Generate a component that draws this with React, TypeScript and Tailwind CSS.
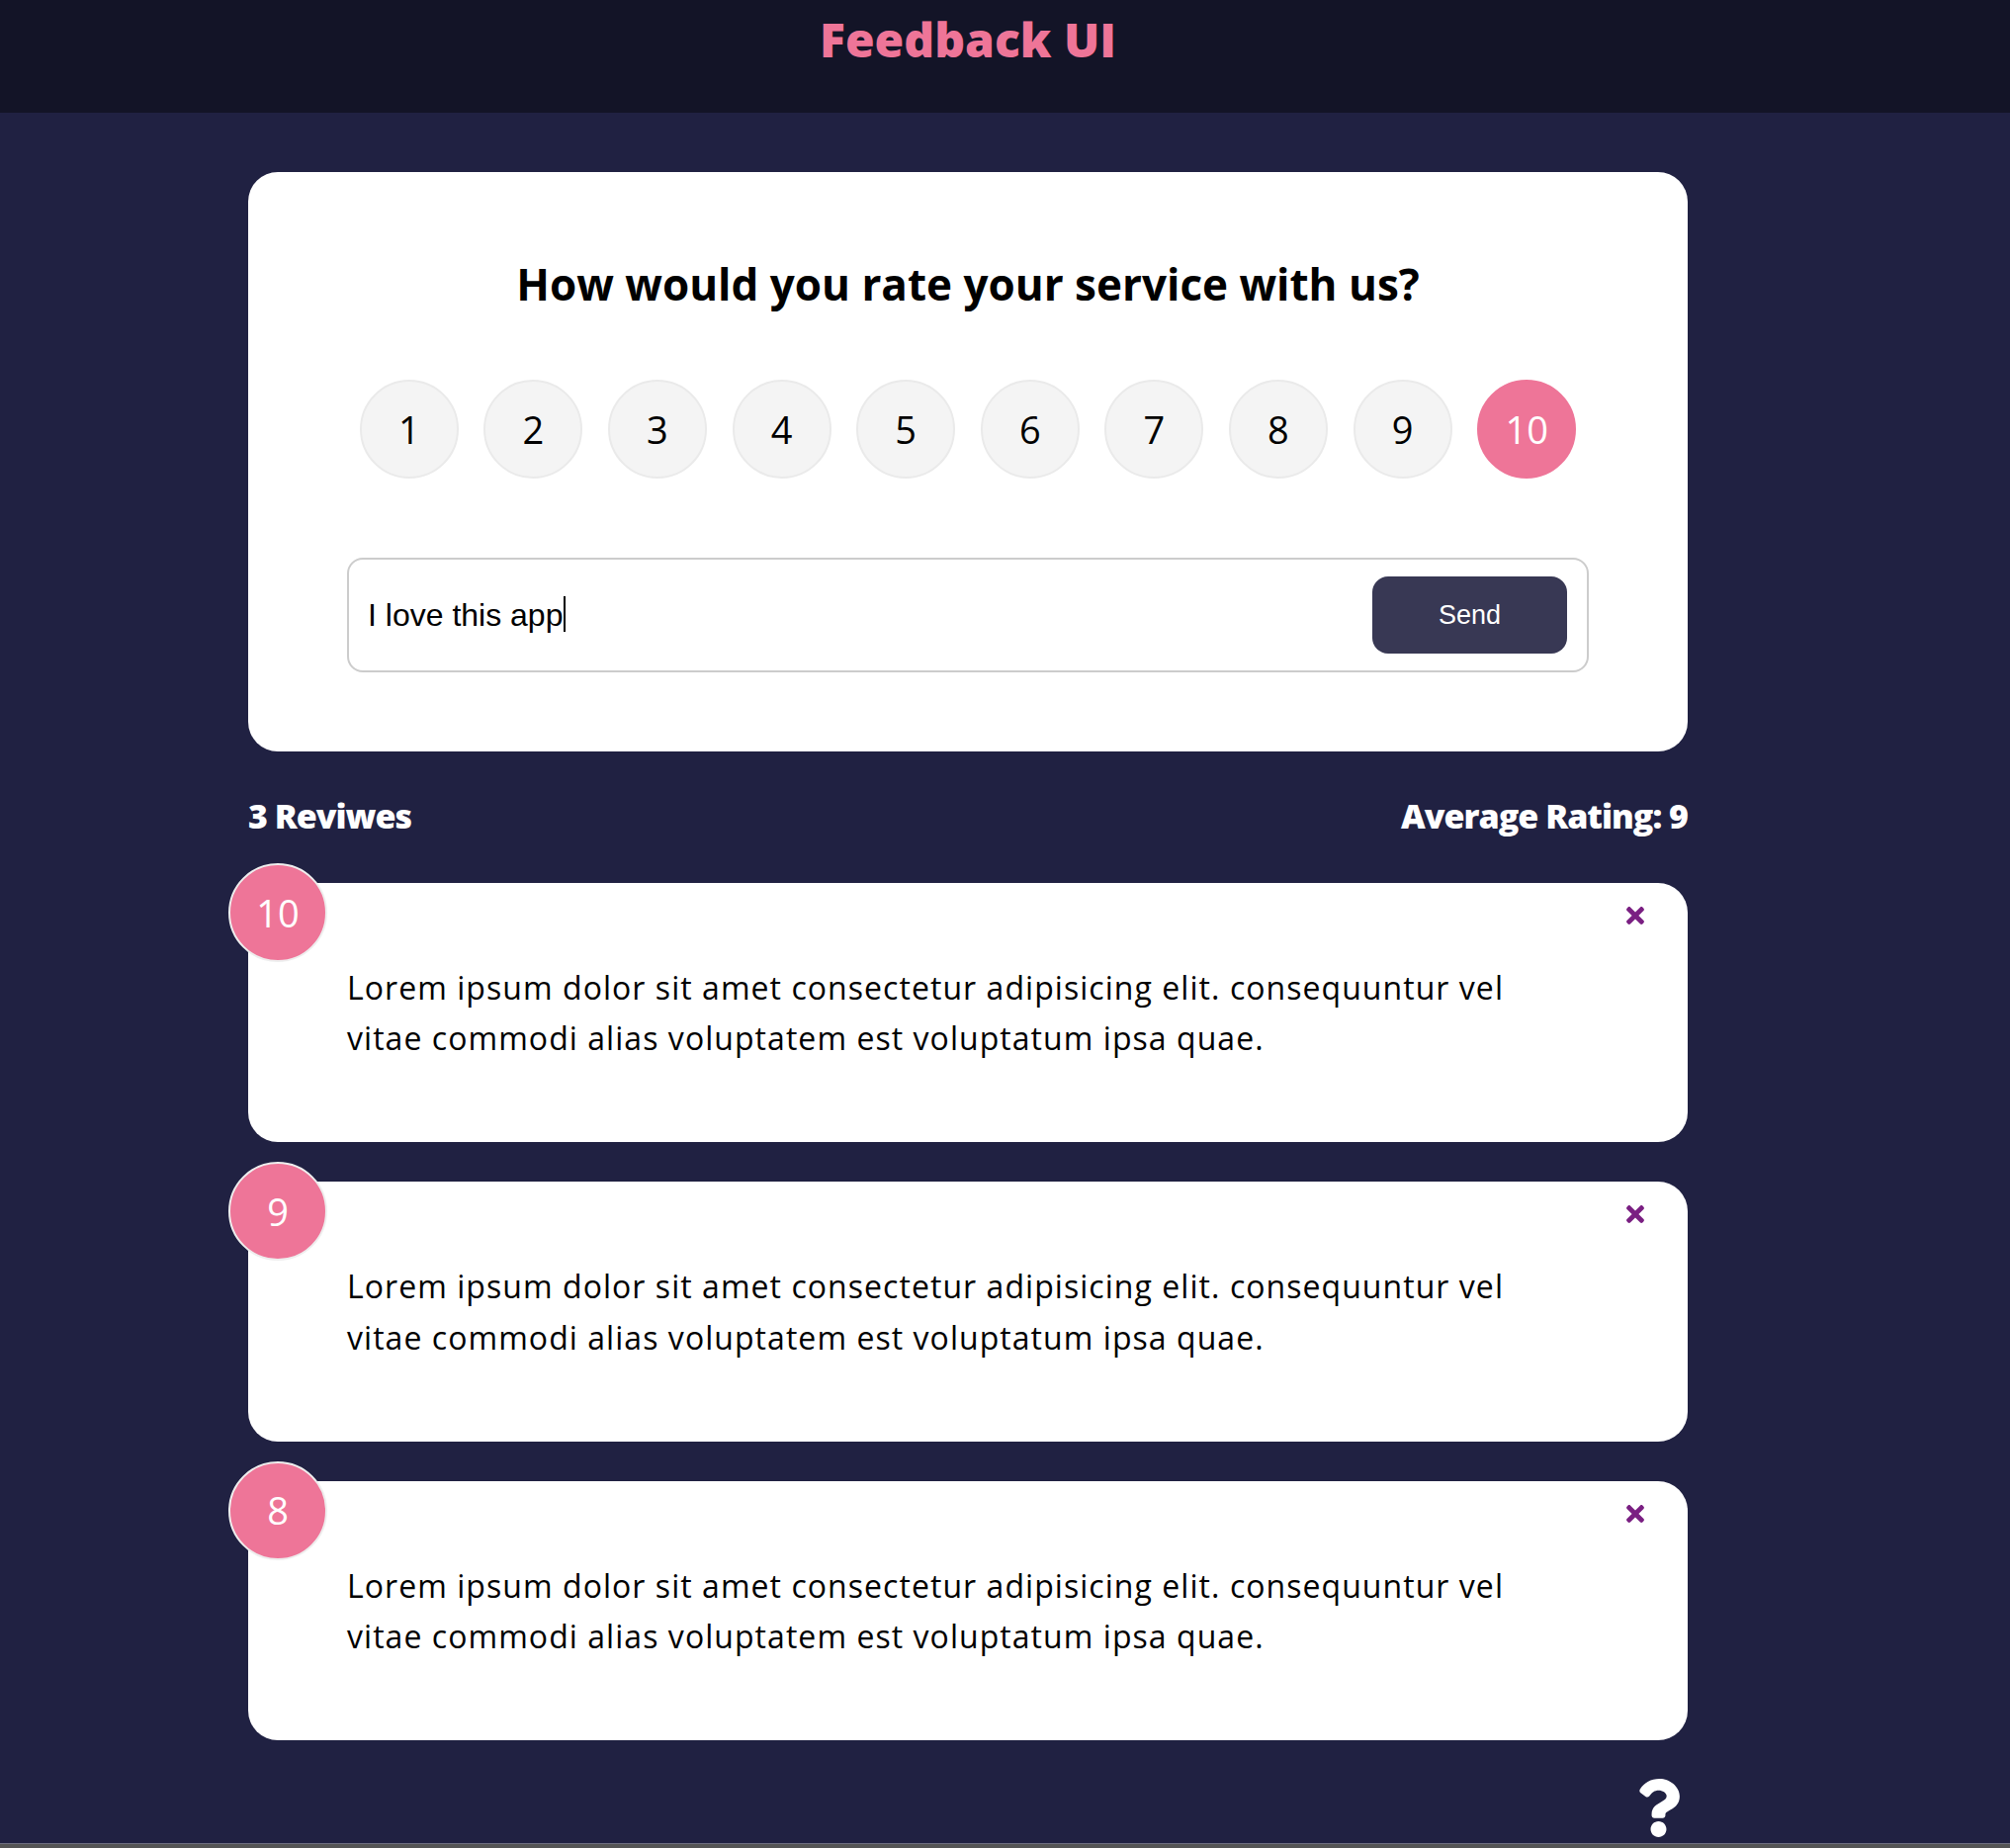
import React, { useState } from 'react';
import { FaTimes, FaQuestion } from 'react-icons/fa';

const reviews = [
  { id: 1, rating: 10, text: 'Lorem ipsum dolor sit amet consectetur adipisicing elit. consequuntur vel vitae commodi alias voluptatem est voluptatum ipsa quae.' },
  { id: 2, rating: 9, text: 'Lorem ipsum dolor sit amet consectetur adipisicing elit. consequuntur vel vitae commodi alias voluptatem est voluptatum ipsa quae.' },
  { id: 3, rating: 8, text: 'Lorem ipsum dolor sit amet consectetur adipisicing elit. consequuntur vel vitae commodi alias voluptatem est voluptatum ipsa quae.' },
];

const RatingSelect = ({ selected, onSelect }: { selected: number; onSelect: (n: number) => void }) => (
  <ul className="mt-[75px] flex justify-around">
    {Array.from({ length: 10 }, (_, i) => i + 1).map((n) => (
      <li key={n}>
        <button
          onClick={() => onSelect(n)}
          className={`flex h-[100px] w-[100px] items-center justify-center rounded-full border-2 text-[38px] ${
            selected === n ? 'border-[#ee7598] bg-[#ee7598] text-white' : 'border-[#eaeaea] bg-[#f4f4f4] text-black'
          }`}
        >
          {n}
        </button>
      </li>
    ))}
  </ul>
);

const ReviewCard = ({ rating, text }: { rating: number; text: string }) => (
  <div className="relative rounded-[30px] bg-white px-[100px] py-[80px]">
    <div className="absolute -left-[20px] -top-[20px] flex h-[100px] w-[100px] items-center justify-center rounded-full border-2 border-[#eeeeee] bg-[#ee7598] text-[38px] text-white">
      {rating}
    </div>
    <button className="absolute right-[40px] top-[20px] text-[#7a1f82]">
      <FaTimes size={26} />
    </button>
    <p className="max-w-[1200px] text-[32px] leading-[1.6] tracking-[1.05px] text-black">{text}</p>
  </div>
);

export default function App() {
  const [selected, setSelected] = useState(10);

  return (
    <div className="relative flex h-[1869px] flex-col bg-[#202142] font-['Open_Sans',sans-serif]">
      <header className="h-[114px] shrink-0 bg-[#131427]">
        <div className="w-[1958px] pt-[16px] text-center">
          <h1 className="text-[48px] font-extrabold leading-[48px] text-[#ee7598]">Feedback UI</h1>
        </div>
      </header>

      <main className="flex-1">
        <div className="mx-[251px] w-[1456px]">
          <div className="mt-[60px] rounded-[30px] bg-white px-[100px] pb-[80px] pt-[91px]">
            <h2 className="text-center text-[44px] font-bold leading-[44px] text-black">
              How would you rate your service with us?
            </h2>
            <RatingSelect selected={selected} onSelect={setSelected} />
            <div className="mt-[80px] flex items-center rounded-[16px] border-2 border-[#cccccc] py-[17px] pl-[19px] pr-[20px]">
              <div className="flex-1 pb-[6px] font-['Liberation_Sans',Arial,sans-serif] text-[32px] leading-[40px] text-black">
                I love this app<span className="ml-[1px] inline-block h-[36px] w-[2px] translate-y-[6px] bg-black align-baseline" />
              </div>
              <button className="h-[78px] w-[197px] rounded-[16px] bg-[#383854] font-['Liberation_Sans',Arial,sans-serif] text-[27px] text-white">
                Send
              </button>
            </div>
          </div>

          <div className="mt-[48px] flex items-center justify-between text-[34px] font-extrabold leading-[34px] tracking-[-1px] text-white">
            <h4>3 Reviwes</h4>
            <h4>Average Rating: 9</h4>
          </div>

          <div className="mt-[51px] flex flex-col gap-[40px]">
            {reviews.map((r) => (
              <ReviewCard key={r.id} rating={r.rating} text={r.text} />
            ))}
          </div>
        </div>
      </main>

      <a className="absolute left-[1648px] top-[1799px] text-white">
        <FaQuestion size={59} />
      </a>

      <div className="h-[5px] shrink-0 border-t border-[#6e6e80] bg-[#555555]" />
    </div>
  );
}
